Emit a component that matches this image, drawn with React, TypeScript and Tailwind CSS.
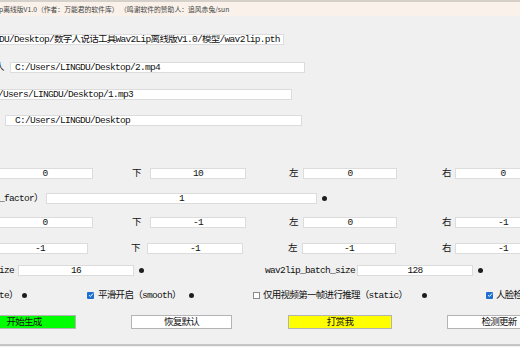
import React from 'react';

const FONT = "font-['Liberation_Mono','Noto_Sans_CJK_SC',monospace] text-[9.5px] tracking-[-0.7px] leading-[11px] text-[#111]";

function Entry({ className, children }: { className: string; children?: React.ReactNode }) {
  return (
    <div className={`h-[11px] shrink-0 bg-white border border-[#dcdcdc] flex items-center overflow-hidden whitespace-nowrap ${className}`}>
      {children}
    </div>
  );
}

function Label({ className, children }: { className: string; children: React.ReactNode }) {
  return <span className={`shrink-0 whitespace-nowrap ${className}`}>{children}</span>;
}

function Info({ className }: { className: string }) {
  return (
    <span className={`shrink-0 w-[5px] h-[5px] rounded-full bg-[#1e1e1e] ${className}`} />
  );
}

function Check({ checked, className }: { checked: boolean; className: string }) {
  if (!checked) {
    return <span className={`shrink-0 w-[7px] h-[7px] bg-white border border-[#8a8a8a] ${className}`} />;
  }
  return (
    <span className={`shrink-0 w-[7px] h-[7px] rounded-[1px] bg-[#1f6fd1] flex items-center justify-center ${className}`}>
      <svg width="6" height="6" viewBox="0 0 6 6">
        <path d="M1 3.2 L2.4 4.5 L5 1.5" stroke="white" strokeWidth="1" fill="none" />
      </svg>
    </span>
  );
}

function Button({ className, children }: { className: string; children: React.ReactNode }) {
  return (
    <div className={`h-[14px] shrink-0 border border-[#b4b4b4] flex items-center justify-center whitespace-nowrap ${className}`}>
      {children}
    </div>
  );
}

export default function App() {
  return (
    <div className={`w-[520px] h-[347px] overflow-hidden bg-[#f0f0f0] flex flex-col ${FONT}`}>
      {/* title bar */}
      <div className="h-[16px] shrink-0 bg-[#f9f1ea] border-t-[2px] border-[#d6d0ca] flex items-center">
        <span className="ml-[-1px] whitespace-nowrap font-['Noto_Sans_CJK_SC',sans-serif] text-[6.8px] tracking-normal text-[#444]">
          p离线版V1.0（作者：万能君的软件库） （鸣谢软件的赞助人：追风赤兔/sun
        </span>
      </div>

      {/* paths */}
      <div className="mt-[17px] h-[12px] flex items-center">
        <Entry className="ml-[-2px] w-[286px]">DU/Desktop/数字人说话工具Wav2Lip离线版V1.0/模型/wav2lip.pth</Entry>
      </div>
      <div className="mt-[16px] h-[12px] flex items-center">
        <Label className="ml-[-5px] w-[9px]">人</Label>
        <Entry className="ml-[6px] w-[295px] pl-[4px]">C:/Users/LINGDU/Desktop/2.mp4</Entry>
      </div>
      <div className="mt-[15px] h-[12px] flex items-center">
        <Entry className="ml-[-4px] w-[296px] pl-[1px]">/Users/LINGDU/Desktop/1.mp3</Entry>
      </div>
      <div className="mt-[14px] h-[12px] flex items-center">
        <Entry className="ml-[5px] w-[297px] pl-[9px]">C:/Users/LINGDU/Desktop</Entry>
      </div>

      {/* padding row */}
      <div className="mt-[41px] h-[12px] flex items-center">
        <Entry className="ml-[-3px] w-[96px] justify-center">0</Entry>
        <Label className="ml-[39px] w-[9px]">下</Label>
        <Entry className="ml-[9px] w-[96px] justify-center">10</Entry>
        <Label className="ml-[43px] w-[9px]">左</Label>
        <Entry className="ml-[5px] w-[94px] justify-center">0</Entry>
        <Label className="ml-[45px] w-[9px]">右</Label>
        <Entry className="ml-[4px] w-[96px] justify-center">0</Entry>
      </div>

      <div className="mt-[13px] h-[12px] flex items-center">
        <Label className="ml-[-1px] w-[47px]">_factor）</Label>
        <Entry className="w-[271px] justify-center">1</Entry>
        <Info className="ml-[5px]" />
      </div>

      <div className="mt-[12px] h-[12px] flex items-center">
        <Entry className="ml-[-3px] w-[96px] justify-center">0</Entry>
        <Label className="ml-[39px] w-[9px]">下</Label>
        <Entry className="ml-[9px] w-[96px] justify-center">-1</Entry>
        <Label className="ml-[43px] w-[9px]">左</Label>
        <Entry className="ml-[5px] w-[94px] justify-center">0</Entry>
        <Label className="ml-[45px] w-[9px]">右</Label>
        <Entry className="ml-[4px] w-[96px] justify-center">-1</Entry>
      </div>

      <div className="mt-[14px] h-[12px] flex items-center">
        <Entry className="ml-[-8px] w-[96px] justify-center">-1</Entry>
        <Label className="ml-[43px] w-[9px]">下</Label>
        <Entry className="ml-[7px] w-[96px] justify-center">-1</Entry>
        <Label className="ml-[45px] w-[9px]">左</Label>
        <Entry className="ml-[5px] w-[94px] justify-center">-1</Entry>
        <Label className="ml-[46px] w-[9px]">右</Label>
        <Entry className="ml-[4px] w-[96px] justify-center">-1</Entry>
      </div>

      {/* batch sizes */}
      <div className="mt-[10px] h-[12px] flex items-center">
        <Label className="ml-[-1px] w-[19px]">ize</Label>
        <Entry className="w-[116px] justify-center">16</Entry>
        <Info className="ml-[5px]" />
        <Label className="ml-[121px] w-[92px]">wav2lip_batch_size</Label>
        <Entry className="w-[116px] justify-center">128</Entry>
        <Info className="ml-[5px]" />
      </div>

      {/* options */}
      <div className="mt-[13px] h-[12px] flex items-center">
        <Label className="ml-[-1px] w-[23px]">te）</Label>
        <Info className="" />
        <Check checked className="ml-[60px]" />
        <Label className="ml-[4px] w-[86px]">平滑开启（smooth）</Label>
        <Info className="ml-[5px]" />
        <Check checked={false} className="ml-[59px]" />
        <Label className="ml-[3px] w-[154px]">仅用视频第一帧进行推理（static）</Label>
        <Info className="ml-[5px]" />
        <Check checked className="ml-[59px]" />
        <Label className="ml-[3px]">人脸检测</Label>
      </div>

      {/* buttons */}
      <div className="mt-[14px] h-[14px] flex items-center">
        <Button className="ml-[-28px] w-[104px] bg-[#00ff00]">开始生成</Button>
        <Button className="ml-[55px] w-[101px] bg-white">恢复默认</Button>
        <Button className="ml-[56px] w-[104px] bg-[#ffff00]">打赏我</Button>
        <Button className="ml-[55px] w-[104px] bg-white">检测更新</Button>
      </div>

      <div className="mt-[15px] h-[2px] shrink-0 bg-[#c4c4c4]" />
    </div>
  );
}
